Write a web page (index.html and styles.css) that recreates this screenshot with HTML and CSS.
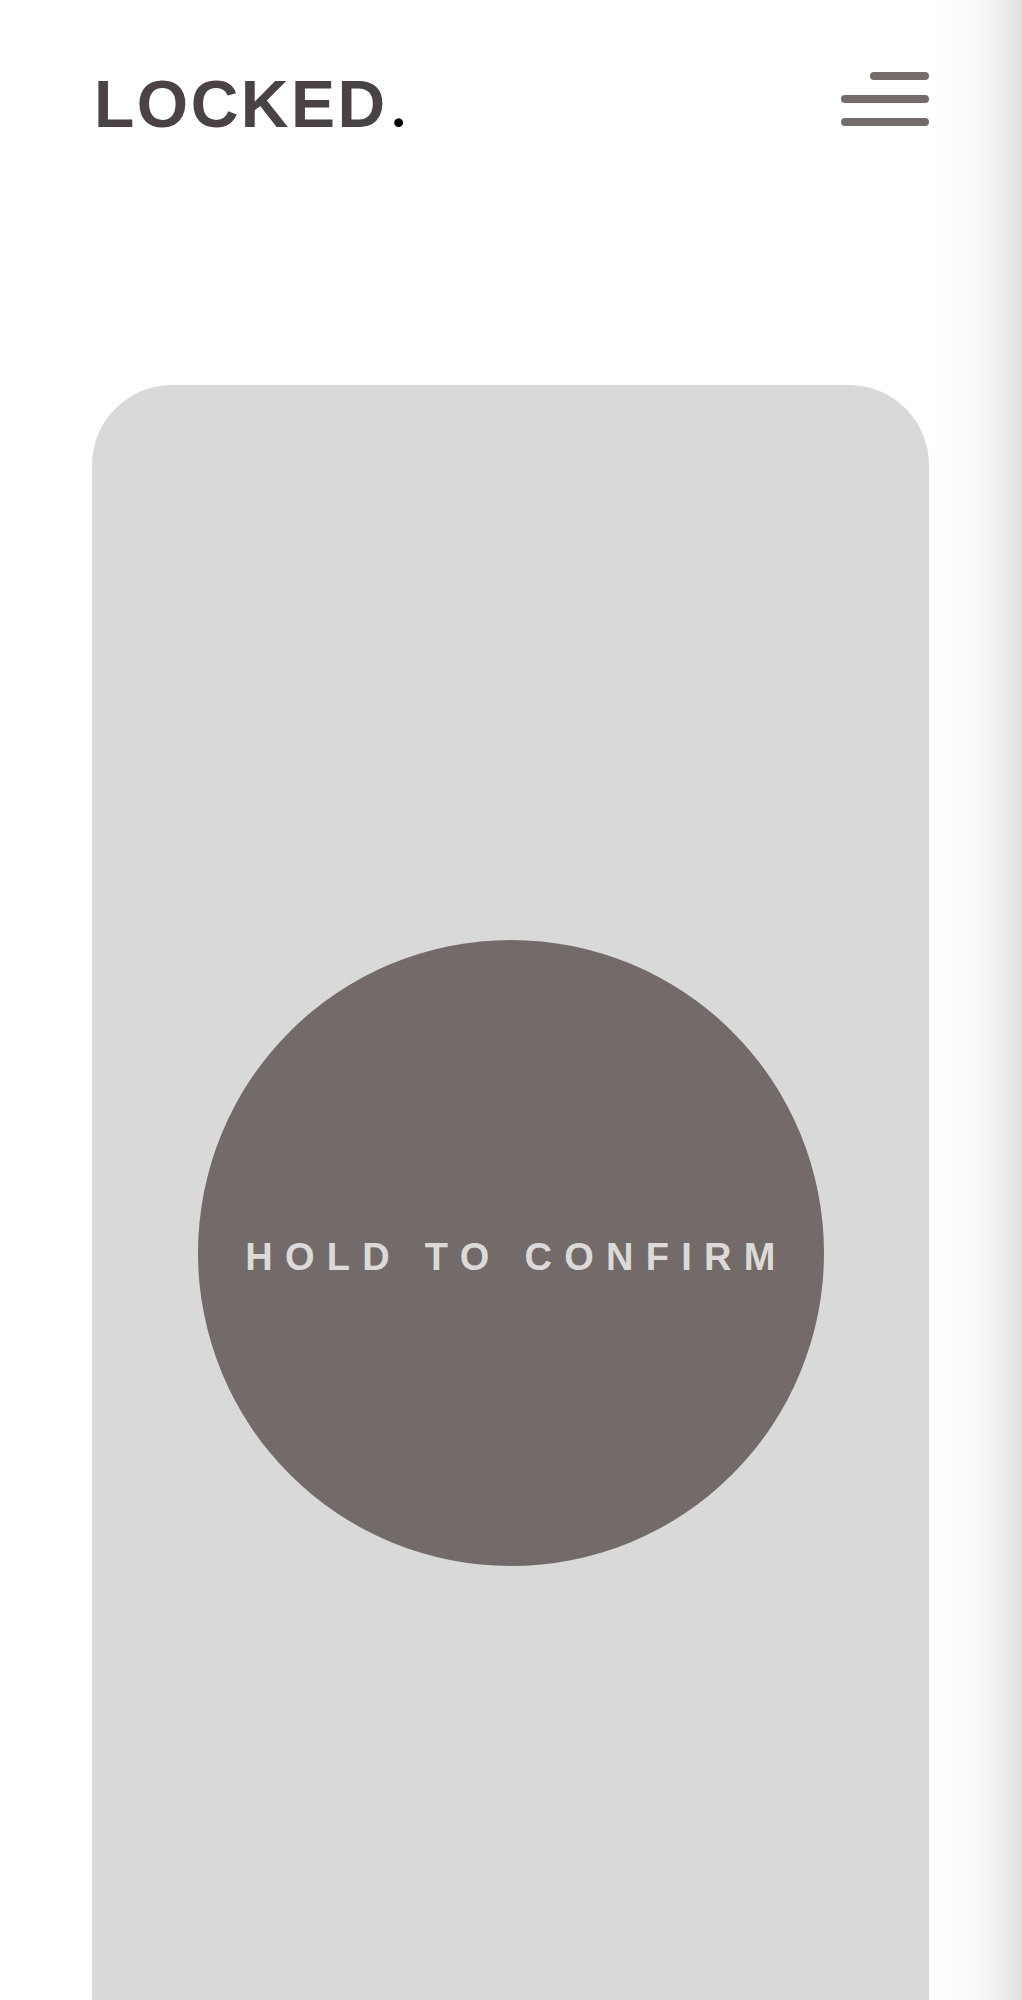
FILE: index.html
```html
<!DOCTYPE html>
<html lang="en">
<head>
<meta charset="utf-8">
<title>Locked.</title>
<link rel="stylesheet" href="styles.css">
</head>
<body>
<header class="site-header">
  <div class="logo">LOCKED<span class="logo-dot">.</span></div>
  <button class="menu-btn" aria-label="Menu">
    <span class="bar bar-short"></span>
    <span class="bar"></span>
    <span class="bar"></span>
  </button>
</header>
<main class="stage">
  <section class="card">
    <button class="hold-btn">HOLD TO CONFIRM</button>
  </section>
</main>
<div class="edge-shade"></div>
</body>
</html>
```
FILE: styles.css
```css
html, body {
  margin: 0;
  padding: 0;
  background: #ffffff;
}
body {
  font-family: "Liberation Sans", Arial, sans-serif;
  overflow: hidden;
}
.site-header {
  display: flex;
  justify-content: space-between;
  align-items: flex-start;
  padding: 71px 93px 0 94px;
}
.logo {
  font-family: "Liberation Sans", Arial, sans-serif;
  font-weight: 700;
  font-size: 66px;
  line-height: 1;
  letter-spacing: 2.5px;
  color: #4a4243;
}
.logo-dot {
  font-family: Lato, "Liberation Sans", sans-serif;
  font-size: 58px;
  color: #000000;
  margin-left: 4px;
}
.menu-btn {
  margin-top: 1px;
  padding: 0;
  border: 0;
  background: none;
  width: 88px;
  display: flex;
  flex-direction: column;
  align-items: flex-end;
  gap: 15px;
}
.bar {
  display: block;
  width: 88px;
  height: 8px;
  border-radius: 4px;
  background: #736c6a;
}
.bar-short {
  width: 59px;
}
.stage {
  padding: 248px 93px 0 92px;
}
.card {
  background: #d9d9d9;
  border-radius: 80px 80px 0 0;
  min-height: 1736px;
  display: flex;
  align-items: center;
  justify-content: center;
}
.hold-btn {
  width: 626px;
  height: 626px;
  border-radius: 50%;
  border: 0;
  background: #736b69;
  color: #dcdad8;
  font-family: "Liberation Sans", Arial, sans-serif;
  font-weight: 700;
  font-size: 38px;
  letter-spacing: 12.3px;
  text-indent: 12px;
  padding: 8px 0 0 0;
}
.edge-shade {
  position: fixed;
  top: 0;
  right: 0;
  width: 90px;
  height: 100%;
  pointer-events: none;
  background: linear-gradient(to right, rgba(0,0,0,0) 0%, rgba(0,0,0,0.02) 45%, rgba(0,0,0,0.06) 75%, rgba(0,0,0,0.12) 100%);
}
```
